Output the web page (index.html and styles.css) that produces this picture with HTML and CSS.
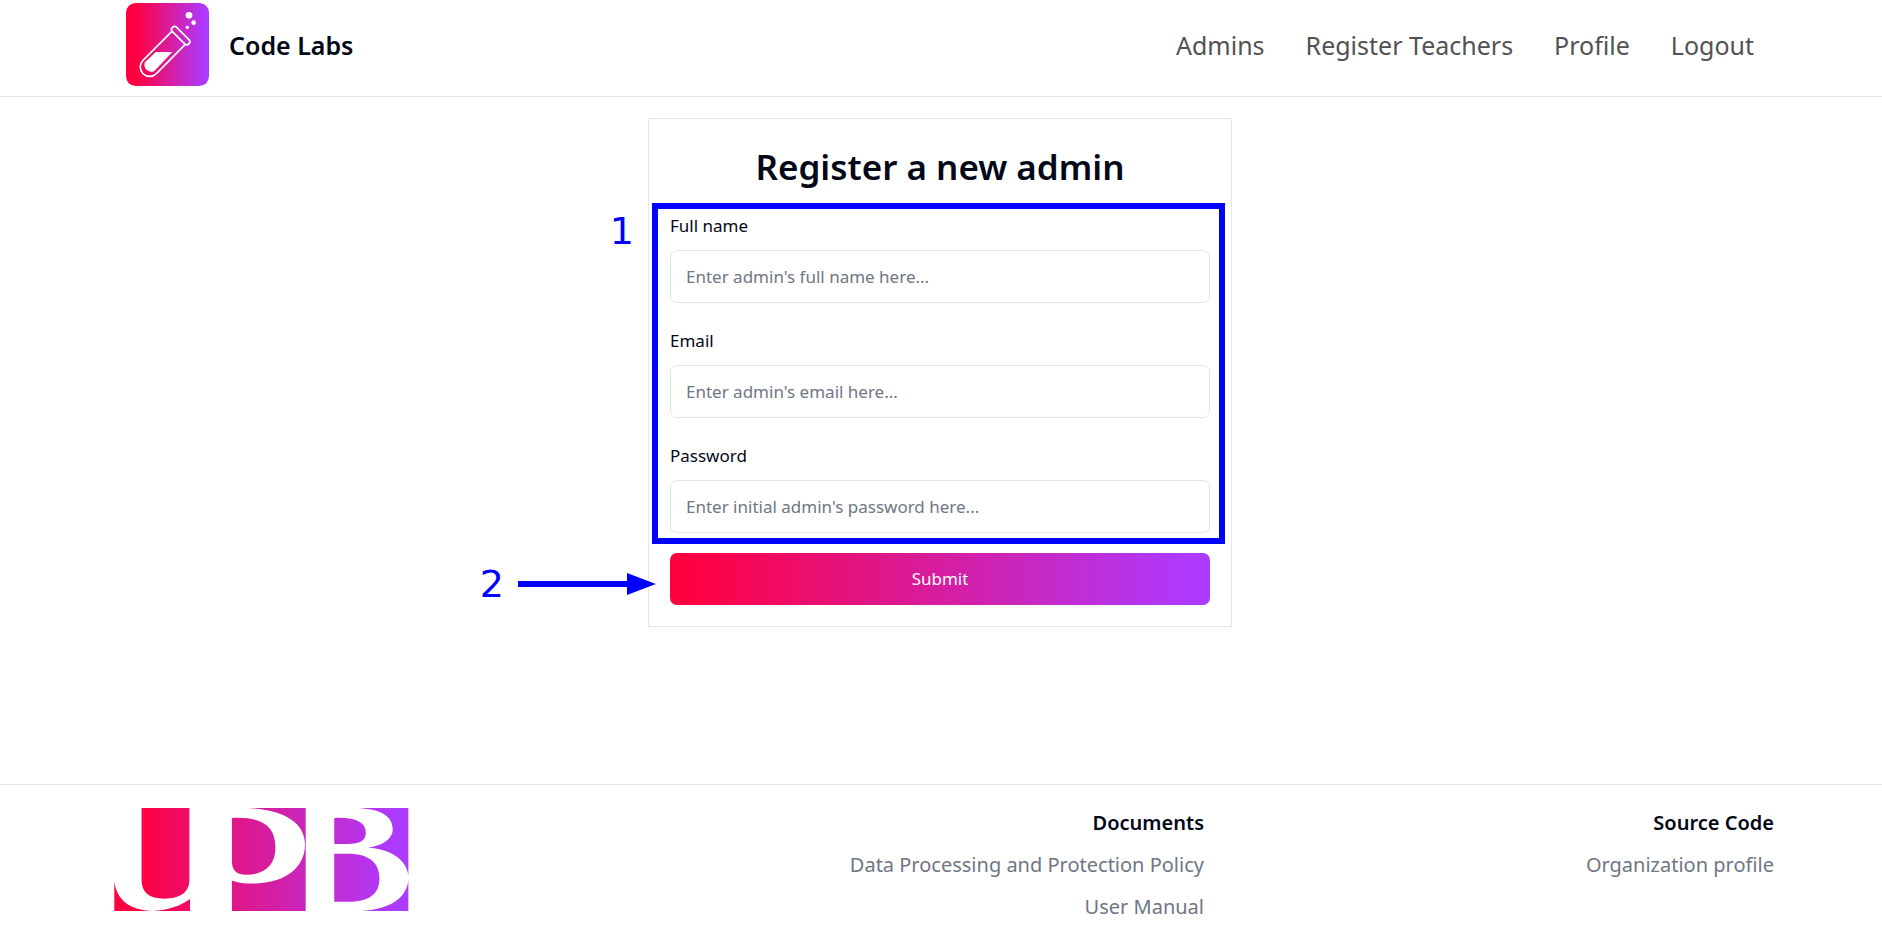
FILE: index.html
```
<!DOCTYPE html>
<html lang="en">
<head>
<meta charset="utf-8">
<title>Code Labs</title>
<meta name="viewport" content="width=device-width, initial-scale=1">
<link rel="stylesheet" href="styles.css">
</head>
<body>
<header class="header">
  <a class="brand" href="#">
    <svg class="brand-logo" viewBox="78 9 249 249" aria-hidden="true">
      <defs>
        <linearGradient id="brand-gradient" x1="0" x2="1" y1="0" y2="0">
          <stop offset="0.12" stop-color="#ff0040"/><stop offset="0.95" stop-color="#ad3aff"/>
        </linearGradient>
      </defs>
      <rect x="78" y="9" width="249" height="249" rx="29" fill="url(#brand-gradient)"/>
      <g fill="none" stroke="#fff" stroke-width="5" stroke-linejoin="round">
        <path d="M215 95L129 181A28 28 0 0 0 169 221L255 134"/>
        <rect x="207" y="98" width="70" height="18" rx="9" transform="rotate(45 242 107)"/>
      </g>
      <path d="M167 156H217L164 212A20 20 0 0 1 135 187Z" fill="#fff"/>
      <g fill="#fff"><circle cx="267" cy="46" r="10"/><circle cx="281" cy="68" r="7"/><circle cx="262" cy="82" r="5"/></g>
    </svg>
    <span>Code Labs</span>
  </a>
  <nav class="nav">
    <a href="#">Admins</a>
    <a href="#">Register Teachers</a>
    <a href="#">Profile</a>
    <a href="#">Logout</a>
  </nav>
</header>

<main class="main">
  <section class="card">
    <h1 class="title">Register a new admin</h1>
    <form class="form">
      <div class="fields">
        <div class="field">
          <label for="name">Full name</label>
          <input id="name" type="text" placeholder="Enter admin's full name here...">
        </div>
        <div class="field">
          <label for="email">Email</label>
          <input id="email" type="email" placeholder="Enter admin's email here...">
        </div>
        <div class="field">
          <label for="password">Password</label>
          <input id="password" type="password" placeholder="Enter initial admin's password here...">
        </div>
        <div class="outline"></div>
        <span class="mark mark-fields">1</span>
      </div>
      <div class="actions">
        <button class="submit" type="submit">Submit</button>
        <div class="callout">
          <span class="mark">2</span>
          <svg class="arrow" viewBox="0 0 138 22" aria-hidden="true"><path d="M0 8H109V0L138 11L109 22V14H0Z" fill="#00f"/></svg>
        </div>
      </div>
    </form>
  </section>
</main>

<footer class="footer">
  <svg class="footer-logo" viewBox="42 108 886 310" role="img" aria-label="UPB">
    <defs>
      <linearGradient id="footer-gradient" gradientUnits="userSpaceOnUse" x1="42" x2="928" y1="0" y2="0">
        <stop offset="0.08" stop-color="#ff0040"/><stop offset="0.95" stop-color="#ad3aff"/>
      </linearGradient>
    </defs>
    <g fill="url(#footer-gradient)">
      <path d="M124 108H268V325C268 362 240 381 192 381C147 381 124 362 124 325ZM42 330C50 385 88 416 158 418H42ZM158 418C203 416 240 403 270 382V418Z"/>
      <path d="M396 138C485 134 527 160 527 228C527 280 495 309 440 309C405 309 396 290 396 268ZM442 108H618V418H396V326C420 335 440 336 470 335C560 332 616 285 616 218C616 150 550 112 442 108Z"/>
      <path d="M704 138C765 135 799 150 799 182C799 208 780 216 745 216H704ZM704 246H745C805 246 840 270 840 320C840 370 805 390 745 390H704ZM775 108H927V310C920 260 870 232 805 227C850 222 880 200 880 172C880 130 840 111 775 108ZM927 325V418H785C870 414 922 380 927 325Z"/>
    </g>
  </svg>
  <div class="links">
    <h2>Documents</h2>
    <a href="#">Data Processing and Protection Policy</a>
    <a href="#">User Manual</a>
  </div>
  <div class="links">
    <h2>Source Code</h2>
    <a href="#">Organization profile</a>
  </div>
</footer>
</body>
</html>
```
FILE: styles.css
```
* { box-sizing: border-box; }
body {
  margin: 0;
  min-height: 100vh;
  display: flex;
  flex-direction: column;
  background: #fff;
  color: #020817;
  font: 17px/28px "Noto Sans", sans-serif;
}
a { color: inherit; text-decoration: none; }

.header {
  display: flex;
  justify-content: space-between;
  align-items: center;
  padding: 3px 128px 10px 126px;
  border-bottom: 1px solid #e5e5e5;
}
.brand { display: flex; align-items: center; gap: 20px; font-size: 25px; font-weight: 600; }
.brand-logo { width: 83px; height: 83px; }
.nav { display: flex; gap: 41px; font-size: 25px; color: #525252; }

.main { flex: 1; padding: 21px 26px 21px 24px; }
.card {
  width: 100%;
  max-width: 584px;
  margin: 0 auto;
  padding: 24px 21px 21px;
  border: 1px solid #e5e5ea;
}
.title {
  margin: 0 0 21px;
  font-size: 35px;
  line-height: 48px;
  font-weight: 600;
  text-align: center;
}
.fields { position: relative; display: flex; flex-direction: column; gap: 24px; }
.field { display: flex; flex-direction: column; gap: 10px; }
.field input {
  width: 100%;
  height: 53px;
  padding: 0 15px;
  border: 1px solid #e2e4ec;
  border-radius: 7px;
  background: #fff;
  color: inherit;
  font: inherit;
}
.field input::placeholder { color: #6f7684; opacity: 1; }
.outline {
  position: absolute;
  inset: -9px -15px -11px -18px;
  border: 6px solid #00f;
  pointer-events: none;
}
.mark { color: #00f; font: 38px/44px "DejaVu Sans", sans-serif; }
.mark-fields { position: absolute; top: -3px; right: calc(100% + 36px); }
.actions { position: relative; margin-top: 20px; }
.submit {
  display: block;
  width: 100%;
  height: 52px;
  border: 0;
  border-radius: 7px;
  background: linear-gradient(90deg, #ff0040 3%, #ad3aff 97%);
  color: #fff;
  font: inherit;
}
.callout {
  position: absolute;
  top: 9px;
  right: calc(100% + 14px);
  display: flex;
  align-items: center;
  gap: 14px;
}
.arrow { width: 138px; height: 22px; }

.footer {
  display: grid;
  grid-template-columns: 1fr 520px 570px;
  align-items: start;
  padding: 23px 108px 11px 114px;
  border-top: 1px solid #e5e5e5;
}
.footer-logo { width: 295px; height: 103px; }
.links { display: flex; flex-direction: column; align-items: flex-end; gap: 14px; padding-top: 1px; font-size: 20px; color: #6f7684; }
.links h2 { margin: 0; font-size: 20px; line-height: 28px; font-weight: 600; color: #020817; }
```
